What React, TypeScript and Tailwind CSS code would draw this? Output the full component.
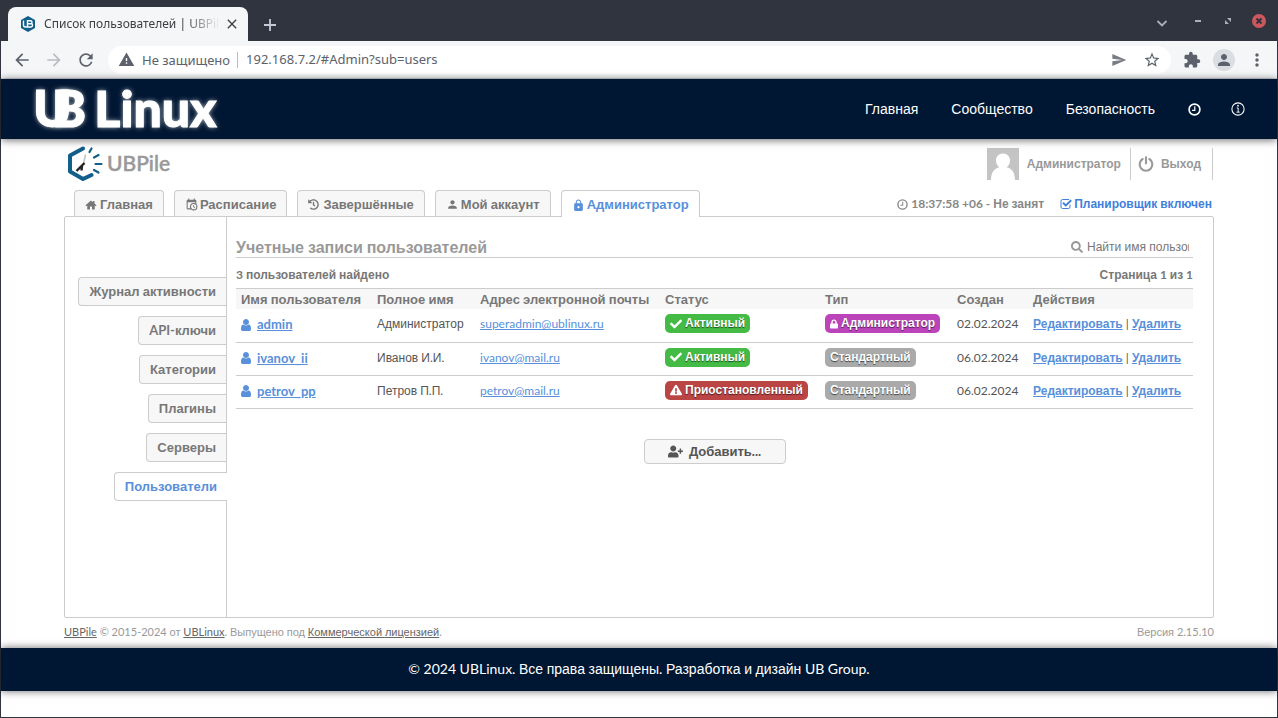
import { Fragment } from "react";
import type { ReactNode } from "react";
import clsx from "clsx";
import {
  FaCheck,
  FaExclamationTriangle,
  FaHistory,
  FaLock,
  FaSearch,
  FaUserPlus
} from "react-icons/fa";
import {
  MdArrowBack,
  MdArrowForward,
  MdClose,
  MdExtension,
  MdLock,
  MdMoreVert,
  MdPerson,
  MdRefresh,
  MdSend,
  MdStarBorder,
  MdWarning
} from "react-icons/md";

type IconProps = {
  className?: string;
};

type TabProps = {
  icon: ReactNode;
  label: string;
  active?: boolean;
};

type BadgeProps = {
  icon?: ReactNode;
  label: string;
  className: string;
};

const users = [
  {
    name: "admin",
    fullName: "Администратор",
    email: "superadmin@ublinux.ru",
    isActive: true,
    isAdmin: true,
    created: "02.02.2024"
  },
  {
    name: "ivanov_ii",
    fullName: "Иванов И.И.",
    email: "ivanov@mail.ru",
    isActive: true,
    isAdmin: false,
    created: "06.02.2024"
  },
  {
    name: "petrov_pp",
    fullName: "Петров П.П.",
    email: "petrov@mail.ru",
    isActive: false,
    isAdmin: false,
    created: "06.02.2024"
  }
];

const sections = [
  "Журнал активности",
  "API-ключи",
  "Категории",
  "Плагины",
  "Серверы",
  "Пользователи"
];

const columns = [
  { title: "Имя пользователя", width: "w-[136px]" },
  { title: "Полное имя", width: "w-[103px]" },
  { title: "Адрес электронной почты", width: "w-[185px]" },
  { title: "Статус", width: "w-[160px]" },
  { title: "Тип", width: "w-[132px]" },
  { title: "Создан", width: "w-[76px]" },
  { title: "Действия", width: "w-auto" }
];

// Latin glyphs and digits are set in Lato, Cyrillic words in Liberation Sans.
const Mixed = ({ text }: { text: string }) => (
  <>
    {text.split(/([\u0400-\u04ff]+)/).map((part, index) =>
      index % 2 === 1 ? (
        <span key={index} className="font-['Liberation_Sans',sans-serif]">
          {part}
        </span>
      ) : (
        <Fragment key={index}>{part}</Fragment>
      )
    )}
  </>
);

const ClockIcon = ({ className }: IconProps) => (
  <svg
    viewBox="0 0 24 24"
    className={className}
    fill="none"
    stroke="currentColor"
  >
    <circle cx="12" cy="12" r="10" strokeWidth="3" />
    <path d="M12.5 6v7.500H7.500" strokeWidth="2.200" />
  </svg>
);

const InfoIcon = ({ className }: IconProps) => (
  <svg
    viewBox="0 0 24 24"
    className={className}
    fill="none"
    stroke="currentColor"
  >
    <circle cx="12" cy="12" r="10.5" strokeWidth="1.8" />
    <path d="M9.8 10.2h2.500v7M9.400 17.400h5.600" strokeWidth="1.600" />
    <circle cx="12" cy="6.400" r="1.500" fill="currentColor" stroke="none" />
  </svg>
);

const HomeIcon = ({ className }: IconProps) => (
  <svg viewBox="0 0 24 24" className={className} fill="currentColor">
    <path d="M12 3 1 12.500l1.500 1.800L4.500 12.800V21h5.500v-6h4v6h5.500v-8.200l2 1.500L23 12.500l-4-3.500V4h-3v2.400z" />
  </svg>
);

const UserIcon = ({ className }: IconProps) => (
  <svg viewBox="0 0 1280 1536" className={className} fill="currentColor">
    <path d="M1280 1271q0 109-62.500 187t-150.500 78H213q-88 0-150.500-78T0 1271q0-85 8.500-160.500t31.500-152 58.500-131 94-89T327 704q131 128 313 128t313-128q76 0 134.500 34.500t94 89 58.500 131 31.500 152 8.500 160.500zM1024 384q0 159-112.500 271.500T640 768 368.500 655.500 256 384t112.500-271.500T640 0t271.500 112.500T1024 384z" />
  </svg>
);

const ScheduleIcon = ({ className }: IconProps) => (
  <svg viewBox="0 0 24 24" className={className} fill="currentColor">
    <path d="M15 13h1.5v2.82l2.44 1.41-.75 1.3L15 16.69V13m4-5H5v11h4.67c-.43-.91-.67-1.93-.67-3a7 7 0 0 1 7-7c1.07 0 2.09.24 3 .67V8M5 21a2 2 0 0 1-2-2V5c0-1.11.89-2 2-2h1V1h2v2h8V1h2v2h1a2 2 0 0 1 2 2v6.1c1.24 1.26 2 2.99 2 4.9a7 7 0 0 1-7 7c-1.91 0-3.64-.76-4.9-2H5m11-9.85A4.85 4.85 0 0 0 11.15 16c0 2.68 2.17 4.85 4.85 4.85A4.85 4.85 0 0 0 20.85 16c0-2.68-2.17-4.85-4.85-4.85Z" />
  </svg>
);

const PowerIcon = ({ className }: IconProps) => (
  <svg
    viewBox="0 0 24 24"
    className={className}
    fill="none"
    stroke="currentColor"
    strokeWidth="3.2"
    strokeLinecap="round"
  >
    <path d="M12 2v9M7 4.500a9.500 9.500 0 1 0 10 0" />
  </svg>
);

const CheckedIcon = ({ className }: IconProps) => (
  <svg
    viewBox="0 0 24 24"
    className={className}
    fill="none"
    stroke="currentColor"
  >
    <path
      d="M17.500 3H5Q2 3 2 6v12q0 3 3 3h12q3 0 3-3v-4"
      strokeWidth="2"
      strokeLinecap="round"
    />
    <path d="M6 9.500 11.500 15 22.500 4.500" strokeWidth="3.600" />
  </svg>
);

const PileLogo = ({ className }: IconProps) => (
  <svg viewBox="0 0 36 36" className={className} fill="none">
    <path
      d="M16 2.500 3 9.500V25.500L16 33 24.500 29"
      stroke="#125f8a"
      strokeWidth="4"
      strokeLinejoin="round"
      strokeLinecap="round"
    />
    <path
      d="M22.500 6 24.500 2.500M27 11.500 31.500 9M28.500 18H34.500M27 24 31.500 26.500"
      stroke="#125f8a"
      strokeWidth="2.2"
      strokeLinecap="round"
    />
    <path d="M18.500 8.500 16.500 18" stroke="#c4c4c4" strokeWidth="1.600" />
    <path
      d="M17.500 17 9.500 25M15 19.500 14.500 24.500"
      stroke="#222222"
      strokeWidth="2.400"
    />
  </svg>
);

const TitleBar = () => (
  <div className="-mx-px flex h-[41px] items-end justify-between bg-[#2f343f] pr-3 pl-2">
    <div className="flex items-end">
      <div className="flex h-[34px] w-60 items-center rounded-t-lg bg-[#f5f6f7] pr-2 pl-3 text-[#3c4043]">
        <svg viewBox="0 0 16 16" className="mr-2 size-4 shrink-0" fill="none">
          <path d="M8 0l7 4v8l-7 4-7-4V4z" fill="#125f8a" />
          <path
            d="M3.500 4.500v4.500q0 2 2 2h5.500q1.500 0 1.500-1.700T11 7.800q1-.3 1-1.500 0-1.500-1.500-1.500H7.500v6M7.500 7.800H11"
            stroke="#ffffff"
            strokeWidth="1.4"
          />
        </svg>
        <span className="mr-1 w-[176px] mask-r-from-80% text-xs whitespace-nowrap">
          Список пользователей | UBPile
        </span>
        <button aria-label="Закрыть вкладку" className="shrink-0">
          <MdClose size={16} stroke="currentColor" />
        </button>
      </div>
      <button aria-label="Новая вкладка" className="mb-2 ml-3.5">
        <svg
          viewBox="0 0 16 16"
          className="size-4"
          stroke="#c3c9d6"
          strokeWidth="1.8"
        >
          <path d="M8 2v12M2 8h12" />
        </svg>
      </button>
    </div>
    <div className="flex h-full items-center gap-6 text-[#a9afbd]">
      <button aria-label="Поиск вкладок" className="pt-1">
        <svg
          viewBox="0 0 12 12"
          className="size-3"
          fill="none"
          stroke="currentColor"
          strokeWidth="1.8"
        >
          <path d="M1.500 4 6 8.500 10.500 4" />
        </svg>
      </button>
      <div className="flex items-center gap-[18px]">
        <button aria-label="Свернуть">
          <svg viewBox="0 0 12 12" className="size-3" fill="currentColor">
            <path d="M3 5h6v2H3z" />
          </svg>
        </button>
        <button aria-label="Восстановить">
          <svg viewBox="0 0 12 12" className="size-3" fill="currentColor">
            <path d="M5 3h4v4zM3 5v4h4z" />
          </svg>
        </button>
        <button aria-label="Закрыть">
          <svg viewBox="0 0 14 14" className="size-3.5">
            <circle cx="7" cy="7" r="7" fill="#cc575d" />
            <path
              d="M4.500 4.500l5 5M9.500 4.500l-5 5"
              stroke="#2f343f"
              strokeWidth="2"
            />
          </svg>
        </button>
      </div>
    </div>
  </div>
);

const AddressBar = () => (
  <div className="flex h-[38px] items-center border-b border-[#d5d5dc] bg-[#f5f6f7] pr-2.5 pl-[11px] text-[#5c616c]">
    <div className="flex gap-3">
      <button aria-label="Назад">
        <MdArrowBack size={20} />
      </button>
      <button aria-label="Вперёд" className="text-[#b9bcc2]">
        <MdArrowForward size={20} />
      </button>
      <button aria-label="Обновить">
        <MdRefresh size={20} />
      </button>
    </div>
    <label className="ml-3 flex h-7 grow items-center rounded-full bg-white pr-2.5 pl-2.5 text-[13px]">
      <MdWarning size={17} className="mr-[7px]" />
      <span className="border-r border-[#b9bcc2] pr-[7px] leading-4 whitespace-nowrap">
        Не защищено
      </span>
      <input
        className="ml-2 grow outline-none"
        defaultValue="192.168.7.2/#Admin?sub=users"
      />
      <MdSend size={16} className="mr-4 text-[#7a7d84]" />
      <MdStarBorder size={18} />
    </label>
    <div className="ml-3 flex items-center gap-3">
      <button aria-label="Расширения">
        <MdExtension size={18} />
      </button>
      <button
        aria-label="Профиль"
        className="flex size-[22px] items-center justify-center rounded-full bg-[#dadde2]"
      >
        <MdPerson size={18} />
      </button>
      <button aria-label="Меню">
        <MdMoreVert size={20} />
      </button>
    </div>
  </div>
);

const SiteHeader = () => (
  <header className="relative z-10 flex h-[60px] items-center justify-between bg-[#001733] px-8 text-white shadow-[0_1px_8px_rgba(0,0,0,0.6)]">
    <a
      href="#home"
      className="flex items-baseline pb-1 leading-none font-black text-shadow-[0_0_5px_rgba(255,255,255,0.8)] [-webkit-text-stroke:1px_white]"
    >
      <span className="text-[52px]">U</span>
      <span className="-ml-5 text-[52px]">B</span>
      <span className="ml-2 text-[50px]">Linux</span>
    </a>
    <nav className="flex items-center gap-[33px] font-['Liberation_Sans',sans-serif] text-sm">
      <a href="#main">Главная</a>
      <a href="#community">Сообщество</a>
      <a href="#security">Безопасность</a>
      <div className="flex items-center gap-[30px]">
        <a href="#time" aria-label="Время">
          <ClockIcon className="size-[13px]" />
        </a>
        <a href="#about" aria-label="О системе">
          <InfoIcon className="size-3.5" />
        </a>
      </div>
    </nav>
  </header>
);

const AppHeader = () => (
  <div className="flex h-9 items-center justify-between pr-px text-[#999999]">
    <a href="#Home" className="flex items-center gap-1 pl-[3px]">
      <PileLogo className="size-9" />
      <span className="pb-0.5 text-[21px] font-medium [-webkit-text-stroke:0.5px_#999999]">
        UBPile
      </span>
    </a>
    <div className="flex h-8 text-xs font-bold">
      <a href="#MyAccount" className="flex items-center gap-2 pr-[9px]">
        <svg viewBox="0 0 32 32" className="size-8">
          <path d="M0 0h32v32H0z" fill="#c4c4c4" />
          <path
            d="M16 5.500c4.200 0 7 3 7 7 0 3-1.300 5.500-3.500 6.700 5 1 8.500 5 8.500 12.800H4c0-7.800 3.500-11.800 8.500-12.800C10.300 18 9 15.500 9 12.500c0-4 2.800-7 7-7z"
            fill="#ffffff"
          />
        </svg>
        <Mixed text="Администратор" />
      </a>
      <a
        href="#logout"
        className="flex items-center gap-[7px] border-x border-[#cccccc] pr-[11px] pl-[7px]"
      >
        <PowerIcon className="size-4" />
        <Mixed text="Выход" />
      </a>
    </div>
  </div>
);

const Tab = ({ icon, label, active }: TabProps) => (
  <a
    href="#tab"
    className={clsx(
      "flex items-center rounded-t border border-b-0 border-[#cccccc] px-2.5 pt-0.5 text-[13px] font-bold",
      active
        ? "-mb-px h-[27px] bg-white text-[#5890db]"
        : "h-[26px] bg-[#f7f7f7] text-[#777777]"
    )}
  >
    <span className="flex w-[15px] items-center">{icon}</span>
    <span>
      <Mixed text={label} />
    </span>
  </a>
);

const Badge = ({ icon, label, className }: BadgeProps) => (
  <span
    className={clsx(
      "inline-flex h-[19px] items-center gap-[3px] rounded-[5px] px-[5px] align-top font-bold text-white text-shadow-[0_1px_1px_rgba(0,0,0,0.6)]",
      className
    )}
  >
    {icon}
    <Mixed text={label} />
  </span>
);

const UsersTable = () => (
  <table className="w-full table-fixed text-left text-xs">
    <thead>
      <tr className="border-t border-[#cccccc] bg-[#f7f7f7] text-[13px] text-[#777777]">
        {columns.map(({ title, width }) => (
          <th
            key={title}
            className={clsx("px-[5px] pt-px leading-[18px] font-bold", width)}
          >
            <Mixed text={title} />
          </th>
        ))}
      </tr>
    </thead>
    <tbody>
      {users.map(({ name, fullName, email, isActive, isAdmin, created }) => (
        <tr
          key={name}
          className="h-[33px] border-b border-[#cccccc] align-top leading-[19px] text-[#555555] *:px-[5px] *:pt-[5px]"
        >
          <td className="text-[13px] font-bold text-[#5890db]">
            <a href="#user" className="flex items-center gap-1.5 pt-px">
              <UserIcon className="h-3 w-2.5" />
              <span className="underline">{name}</span>
            </a>
          </td>
          <td>
            <Mixed text={fullName} />
          </td>
          <td>
            <a href="#mail" className="text-[#5890db] underline">
              {email}
            </a>
          </td>
          <td>
            {isActive ? (
              <Badge
                icon={<FaCheck size={12} />}
                label="Активный"
                className="bg-[#44bb44]"
              />
            ) : (
              <Badge
                icon={<FaExclamationTriangle size={12} />}
                label="Приостановленный"
                className="bg-[#bb4444]"
              />
            )}
          </td>
          <td>
            {isAdmin ? (
              <Badge
                icon={<FaLock className="h-2.5 w-2" />}
                label="Администратор"
                className="bg-[#bb44bb]"
              />
            ) : (
              <Badge label="Стандартный" className="bg-[#aaaaaa]" />
            )}
          </td>
          <td>{created}</td>
          <td className="whitespace-nowrap">
            <a href="#edit" className="font-bold text-[#5890db] underline">
              <Mixed text="Редактировать" />
            </a>
            {" | "}
            <a href="#delete" className="font-bold text-[#5890db] underline">
              <Mixed text="Удалить" />
            </a>
          </td>
        </tr>
      ))}
    </tbody>
  </table>
);

const App = () => {
  return (
    <div className="min-h-screen border-x border-b border-[#2f343f] bg-white font-['Lato',sans-serif]">
      <div className="font-['Noto_Sans',sans-serif]">
        <TitleBar />
        <AddressBar />
      </div>
      <SiteHeader />

      <main className="px-[63px] pt-[7px]">
        <AppHeader />

        <div className="mt-2 flex items-end justify-between">
          <nav className="flex items-end gap-2.5 pl-2.5">
            <Tab icon={<HomeIcon className="size-3" />} label="Главная" />
            <Tab
              icon={<ScheduleIcon className="size-[13px]" />}
              label="Расписание"
            />
            <Tab icon={<FaHistory size={11} />} label="Завершённые" />
            <Tab icon={<MdPerson size={13} />} label="Мой аккаунт" />
            <Tab icon={<MdLock size={13} />} label="Администратор" active />
          </nav>
          <div className="flex h-[26px] items-center gap-4 pt-0.5 pr-0.5 text-xs font-bold text-[#888888]">
            <span className="flex items-center gap-[3px]">
              <ClockIcon className="size-[11px]" />
              <span>
                <Mixed text="18:37:58 +06 - Не занят" />
              </span>
            </span>
            <button className="flex items-center gap-0.5 text-[#3f7fdd]">
              <CheckedIcon className="size-3" />
              <span>
                <Mixed text="Планировщик включен" />
              </span>
            </button>
          </div>
        </div>

        <div className="flex min-h-[402px] rounded-xs border border-[#cccccc]">
          <nav className="flex w-[162px] shrink-0 flex-col items-end gap-2.5 border-r border-[#cccccc] pt-[60px]">
            {sections.map((section) => (
              <a
                key={section}
                href="#section"
                className={clsx(
                  "rounded-l border border-r-0 border-[#cccccc] px-2.5 py-1 text-[13px] leading-[19px] font-bold",
                  section === "Пользователи"
                    ? "-mr-px bg-white text-[#5890db]"
                    : "bg-[#f7f7f7] text-[#777777]"
                )}
              >
                <Mixed text={section} />
              </a>
            ))}
          </nav>

          <section className="grow pt-5 pr-5 pl-[9px]">
            <div className="flex h-[21px] items-center justify-between border-b border-[#cccccc] text-[#999999]">
              <h1 className="text-base font-bold">
                <Mixed text="Учетные записи пользователей" />
              </h1>
              <label className="flex items-center gap-1 pr-1">
                <FaSearch size={12} />
                <input
                  aria-label="Найти имя пользователя"
                  placeholder="Найти имя пользователя"
                  className="w-[102px] font-['Liberation_Sans',sans-serif] text-xs outline-none placeholder:text-[#777777]"
                />
              </label>
            </div>
            <div className="flex h-[30px] items-center justify-between pt-1 text-xs font-bold text-[#777777]">
              <span>
                <Mixed text="3 пользователей найдено" />
              </span>
              <span>
                <Mixed text="Страница 1 из 1" />
              </span>
            </div>
            <UsersTable />
            <button className="mx-auto mt-[30px] flex h-[25px] w-[142px] items-center justify-center gap-1.5 rounded border border-[#cccccc] bg-[#f7f7f7] pt-px text-[13px] font-bold text-[#555555]">
              <FaUserPlus size={15} />
              <span>
                <Mixed text="Добавить..." />
              </span>
            </button>
          </section>
        </div>

        <div className="flex h-[30px] items-center justify-between pb-0.5 text-[11px] text-[#999999]">
          <p>
            <a href="#pile" className="text-[#666666] underline">
              UBPile
            </a>
            <Mixed text=" © 2015-2024 от " />
            <a href="#ublinux" className="text-[#666666] underline">
              UBLinux
            </a>
            <Mixed text=". Выпущено под " />
            <a href="#license" className="text-[#666666] underline">
              <Mixed text="Коммерческой лицензией" />
            </a>
            .
          </p>
          <span>
            <Mixed text="Версия 2.15.10" />
          </span>
        </div>
      </main>

      <footer className="flex h-[43px] items-center justify-center bg-[#001733] pb-0.5 text-sm text-white shadow-[0_0_8px_rgba(0,0,0,0.6)]">
        <p>
          <Mixed text="© 2024 UBLinux. Все права защищены. Разработка и дизайн UB Group." />
        </p>
      </footer>
    </div>
  );
};

export default App;
